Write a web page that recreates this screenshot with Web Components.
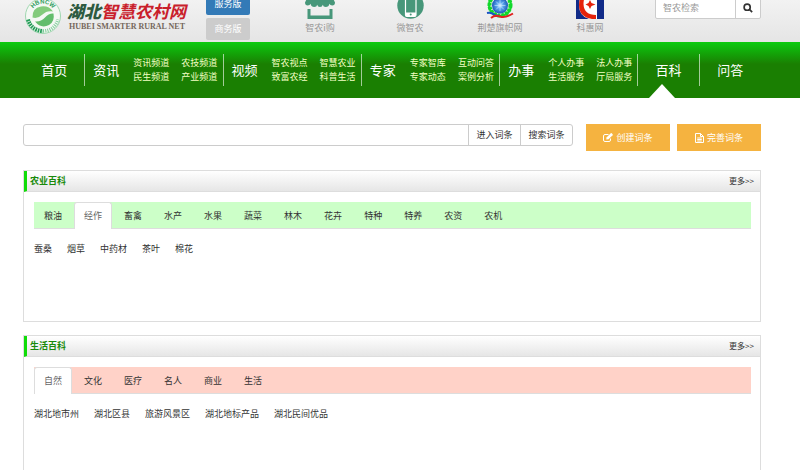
<!DOCTYPE html>
<html lang="zh-CN">
<head>
<meta charset="utf-8">
<meta name="viewport" content="width=device-width, initial-scale=1">
<title>湖北智慧农村网 - 百科</title>
<style>
  html { background: #fff; }
  body {
    margin: 0;
    font: 9px/14px "Noto Sans CJK SC", sans-serif;
    color: #333;
    --edge-left: 24px;
    --edge-right: 39px;
    --line: #ddd;
  }
  main {
    display: flex;
    flex-direction: column;
    gap: 13px;
    padding: 26px var(--edge-right) 0 var(--edge-left);
  }
  wiki-search { margin-bottom: 6px; }
</style>
</head>
<body>
<site-header>
  <site-logo slot="logo"></site-logo>
  <quick-link label="智农i购">
    <svg width="30" height="27" viewBox="0 0 30 27"><path fill="#47977a" d="M5 0h20l5 10.500q0 3-2.800 3-2.200 0-2.700-1.800-.8 3.300-3.800 3.300-2.500 0-2.900-2.300Q17.300 15 15 15t-2.800-2.300Q11.800 15 9.300 15q-3 0-3.800-3.300-.5 1.800-2.700 1.800-2.800 0-2.800-3zM2.500 17h3v6.500h19V17h3v10h-25z"/></svg>
  </quick-link>
  <quick-link label="微智农">
    <svg width="27" height="27" viewBox="0 0 27 27"><circle cx="13.500" cy="13.500" r="13.200" fill="#47977a"/><rect x="8.500" y="3" width="10.500" height="21.500" rx="1.500" fill="#47977a" stroke="#fff" stroke-width="1.200"/><path fill="#fff" d="M8.500 20.500H19V23q0 1.500-1.500 1.500H10q-1.500 0-1.500-1.500z"/><circle cx="13.700" cy="22.400" r="1" fill="#47977a"/></svg>
  </quick-link>
  <quick-link label="荆楚旗帜网">
    <svg width="28" height="27" viewBox="0 0 28 27"><defs><radialGradient id="g" cx=".5" cy=".5"><stop offset="0" stop-color="#d8f1ff"/><stop offset=".4" stop-color="#5ca8ee"/><stop offset="1" stop-color="#1d5bb8"/></radialGradient></defs><circle cx="14" cy="13" r="10.500" fill="none" stroke="#12d92c" stroke-width="4" stroke-dasharray="3 1"/><circle cx="14" cy="13" r="11" fill="none" stroke="#12d92c" stroke-width="2"/><circle cx="14" cy="13.500" r="8" fill="url(#g)"/><path d="M14 8v11M8.500 13.500h11M10 9.500l8 8M18 9.500l-8 8" stroke="#cfeaff" stroke-width=".6"/><path d="M1 21q4-1 7 1.500t5 .5" fill="none" stroke="#1954c4" stroke-width="2"/><path d="M5 26q4-3.500 9-1.500t13-3" fill="none" stroke="#e02320" stroke-width="2"/></svg>
  </quick-link>
  <quick-link label="科惠网">
    <svg width="28" height="27" viewBox="0 0 28 27"><path fill="#112b88" d="M0 0h28v27H0z"/><path fill="#fff" d="M8 0h13v27h-8Q3 24 3 13 3 5 8 0z"/><path fill="#e5230c" d="M8 0Q3 5 3 13q0 12 13 14h4v-4Q8 23 7.500 12 7.500 5 12 0z"/><path fill="#e5230c" d="M14 8l1.500 3 4 1.500-4 1.500-1.500 3-1.500-3-3-1.500 3-1.500z"/></svg>
  </quick-link>
</site-header>

<site-nav>
  <nav-item label="首页"></nav-item>
  <nav-item label="资讯" links="资讯频道,农技频道,民生频道,产业频道"></nav-item>
  <nav-item label="视频" links="智农视点,智慧农业,致富农经,科普生活"></nav-item>
  <nav-item label="专家" links="专家智库,互动问答,专家动态,案例分析"></nav-item>
  <nav-item label="办事" links="个人办事,法人办事,生活服务,厅局服务"></nav-item>
  <nav-item label="百科" current></nav-item>
  <nav-item label="问答"></nav-item>
</site-nav>

<main>
  <wiki-search>
    <action-button slot="actions" label="创建词条">
      <svg width="10" height="9" viewBox="0 0 20 18" fill="none" stroke="#fff" stroke-width="2"><path d="M15 11v3q0 3-3 3H4q-3 0-3-3V6q0-3 3-3h7"/><path fill="#fff" stroke="none" d="M7 9l8.500-8.500q1-.7 2 .2l1.600 1.600q1 1 .2 2L11 12.500l-4.500.7z"/></svg>
    </action-button>
    <action-button slot="actions" label="完善词条">
      <svg width="9" height="10" viewBox="0 0 18 20" fill="none" stroke="#fff" stroke-width="2"><path d="M1 1h10l6 6v12H1zM11 1v6h6M4.500 10h9M4.500 13h9M4.500 16h9"/></svg>
    </action-button>
  </wiki-search>
  <wiki-panel heading="农业百科" tint="#ccffc8" active="1" tabs="粮油,经作,畜禽,水产,水果,蔬菜,林木,花卉,特种,特养,农资,农机">
    <a href="#">蚕桑</a><a href="#">烟草</a><a href="#">中药材</a><a href="#">茶叶</a><a href="#">棉花</a>
  </wiki-panel>
  <wiki-panel heading="生活百科" tint="#ffd2c8" active="0" tabs="自然,文化,医疗,名人,商业,生活">
    <a href="#">湖北地市州</a><a href="#">湖北区县</a><a href="#">旅游风景区</a><a href="#">湖北地标产品</a><a href="#">湖北民间优品</a>
  </wiki-panel>
</main>

<script>
const base = `<style>
  *, *::before, *::after { box-sizing: border-box; }
  a { color: inherit; text-decoration: none; white-space: nowrap; }
  button, input { font: inherit; color: inherit; margin: 0; padding: 0; border: 0; background: none; border-radius: 0; white-space: nowrap; }
  svg, ::slotted(svg) { display: block; flex: none; }
</style>`;

function define(name, render) {
  customElements.define(name, class extends HTMLElement {
    constructor() { super(); this.attachShadow({ mode: 'open' }); }
    connectedCallback() { this.shadowRoot.innerHTML = base + render(this); }
  });
}
const list = (el, attr) => (el.getAttribute(attr) || '').split(',').filter(Boolean);

define('site-logo', () => `<style>
  :host { display: block; }
  a { display: flex; gap: 5px; align-items: flex-end; }
  .words { display: flex; flex-direction: column; padding-bottom: 4px; }
  .name { font-size: 17px; line-height: 22px; font-weight: 700; font-style: italic; color: #c9202b; }
  .name b { color: #2d5a40; }
  .latin { font: bold 8px/9px "Liberation Serif", serif; color: #75675c; padding-left: 2px; }
</style>
<a href="#" aria-label="湖北智慧农村网">
  <svg width="38" height="38" viewBox="0 0 38 38">
    <circle cx="19" cy="19" r="17.500" fill="#f4f8f4" stroke="#8ccfa0" stroke-width=".8"/>
    <path d="M8.500 20.500Q8 11 17 9.500q8-1 12 5-6-1.500-10.500 3t-10 3z" fill="#83cb7c"/>
    <path d="M11 24.500q6 .5 10-4t8.500-4q1.500 8-4.500 11.500-8 4-14-3.500z" fill="#62bd6c"/>
    <path d="M9 22.500q7 1 11-3.500t9.500-3.500" fill="none" stroke="#f4f8f4" stroke-width="1.200"/>
    <path d="M4 22.500Q7.500 33.500 19 34" fill="none" stroke="#239c58" stroke-width="4" stroke-dasharray="1.700 .8"/>
    <path d="M19 34Q30.500 33.500 34 22.500" fill="none" stroke="#7dcc98" stroke-width="3.500" stroke-dasharray="1 1.200"/>
    <defs><path id="arc" d="M7 18.500A12 12 0 0 1 31 18.500"/></defs>
    <text font-family="Liberation Sans, sans-serif" font-size="6" font-weight="bold" fill="#299a5a" text-anchor="middle"><textPath href="#arc" startOffset="50%">HBNCW</textPath></text>
  </svg>
  <span class="words"><span class="name"><b>湖北</b>智慧农村网</span><span class="latin">HUBEI SMARTER RURAL NET</span></span>
</a>`);

define('quick-link', el => `<style>
  :host { display: block; }
  a { display: flex; flex-direction: column; align-items: center; gap: 2px; color: #999; }
</style><a href="#"><slot></slot><span>${el.getAttribute('label')}</span></a>`);

define('site-header', () => `<style>
  :host { display: flex; align-items: flex-end; height: 42px; overflow: hidden;
    padding: 0 var(--edge-right) 0 var(--edge-left); background: linear-gradient(#f2f2f2, #e5e5e5); }
  .brand { width: 182px; padding-bottom: 7px; }
  .modes { display: flex; flex-direction: column; gap: 3px; width: 44px; padding-bottom: 2px; }
  .modes button { height: 22px; border-radius: 2px; background: #ccc; color: #fff; }
  .modes button.on { background: #337ab7; }
  .links { flex: 1; display: grid; grid-template-columns: repeat(4, 1fr); margin: 0 20px 0 25px; padding-bottom: 7px; align-items: end; }
  form { display: flex; width: 106px; height: 22px; margin-bottom: 23px; border: 1px solid #ccc; border-radius: 2px; background: #fff; }
  input { flex: 1; min-width: 0; padding: 0 7px; outline: 0; }
  input::placeholder { color: #999; }
  form button { width: 25px; border-left: 1px solid #ccc; display: grid; place-items: center; }
</style>
<div class="brand"><slot name="logo"></slot></div>
<div class="modes"><button type="button" class="on">服务版</button><button type="button">商务版</button></div>
<div class="links"><slot></slot></div>
<form role="search"><input type="text" placeholder="智农检索" aria-label="智农检索">
<button type="button" aria-label="检索"><svg width="10" height="10" viewBox="0 0 18 18" fill="none" stroke="#333" stroke-width="3"><circle cx="7.500" cy="7.500" r="5.500"/><path d="M11.500 11.500l5 5"/></svg></button></form>`);

define('nav-item', el => {
  const links = list(el, 'links');
  return `<style>
  :host { display: flex; align-items: center; position: relative; flex: 1 0 ${links.length ? 138 : 61}px; color: #fff; }
  .box { flex: 1; display: flex; align-items: center; height: 32px; border-right: 1px solid rgba(255,255,255,.6);
    ${links.length ? 'padding-left: 8px; gap: 14px;' : 'justify-content: center;'} }
  :host(:last-child) .box { border: 0; }
  .main { font-size: 13px; line-height: 20px; }
  .sub { display: grid; grid-template-columns: auto auto; column-gap: 12px; color: #f4ffc4; }
  :host([current])::after { content: ""; position: absolute; bottom: 0; left: calc(50% - 20px);
    border: solid transparent; border-width: 0 13px 14px; border-bottom-color: #fff; }
</style><div class="box"><a class="main" href="#">${el.getAttribute('label')}</a>${links.length ? `<div class="sub">${links.map(t => `<a href="#">${t}</a>`).join('')}</div>` : ''}</div>`;
});

define('site-nav', () => `<style>
  :host { display: block; background: linear-gradient(#0bcb0f, #1a7f02 22px); }
  nav { display: flex; height: 56px; padding: 0 var(--edge-right) 2px var(--edge-left); }
  nav { padding-bottom: 0; }
</style><nav><slot></slot></nav>`);

define('action-button', el => `<style>
  :host { display: block; }
  button { display: flex; align-items: center; justify-content: center; gap: 3px; width: 84px; height: 27px; background: #f5b340; color: #fff; }
</style><button type="button"><slot></slot><span>${el.getAttribute('label')}</span></button>`);

define('wiki-search', () => `<style>
  :host { display: flex; align-items: flex-start; gap: 13px; }
  form { flex: 1; display: flex; height: 22px; border: 1px solid #ccc; border-radius: 3px; margin-left: -1px; }
  input { flex: 1; min-width: 0; padding: 0 8px; outline: 0; }
  form button { width: 52px; border-left: 1px solid #ccc; }
  .actions { display: flex; gap: 7px; }
</style>
<form><input type="text" aria-label="词条"><button type="button">进入词条</button><button type="button">搜索词条</button></form>
<div class="actions"><slot name="actions"></slot></div>`);

define('wiki-panel', el => {
  const active = Number(el.getAttribute('active'));
  return `<style>
  :host { display: block; min-height: 152px; margin-left: -1px; border: 1px solid var(--line); box-sizing: border-box; }
  header { display: flex; align-items: center; justify-content: space-between; height: 21px; padding: 0 6px 0 3px;
    border-left: 3px solid #10dc08; border-bottom: 1px solid var(--line); background: linear-gradient(#fff, #e6e6e6); }
  h2 { margin: 0; font-size: 9px; line-height: 14px; font-weight: 700; color: #198a0b; }
  header a { font-size: 8px; }
  .tabs { display: flex; gap: 2px; height: 27px; margin: 10px 9px 0 10px; background: ${el.getAttribute('tint')}; border-bottom: 1px solid var(--line); }
  .tabs button { padding: 0 9px; border: 1px solid transparent; border-bottom: 0; border-radius: 3px 3px 0 0; }
  .tabs button[aria-selected="true"] { background: #fff; border-color: var(--line); color: #666; margin-bottom: -1px; }
  .items { display: flex; flex-wrap: wrap; gap: 0 15px; margin: 13px 9px 0 10px; }
  ::slotted(a) { color: #333; text-decoration: none; white-space: nowrap; }
</style>
<header><h2>${el.getAttribute('heading')}</h2><a href="#">更多&gt;&gt;</a></header>
<div class="tabs" role="tablist">${list(el, 'tabs').map((t, i) => `<button type="button" role="tab" aria-selected="${i === active}">${t}</button>`).join('')}</div>
<div class="items"><slot></slot></div>`;
});
</script>
</body>
</html>
